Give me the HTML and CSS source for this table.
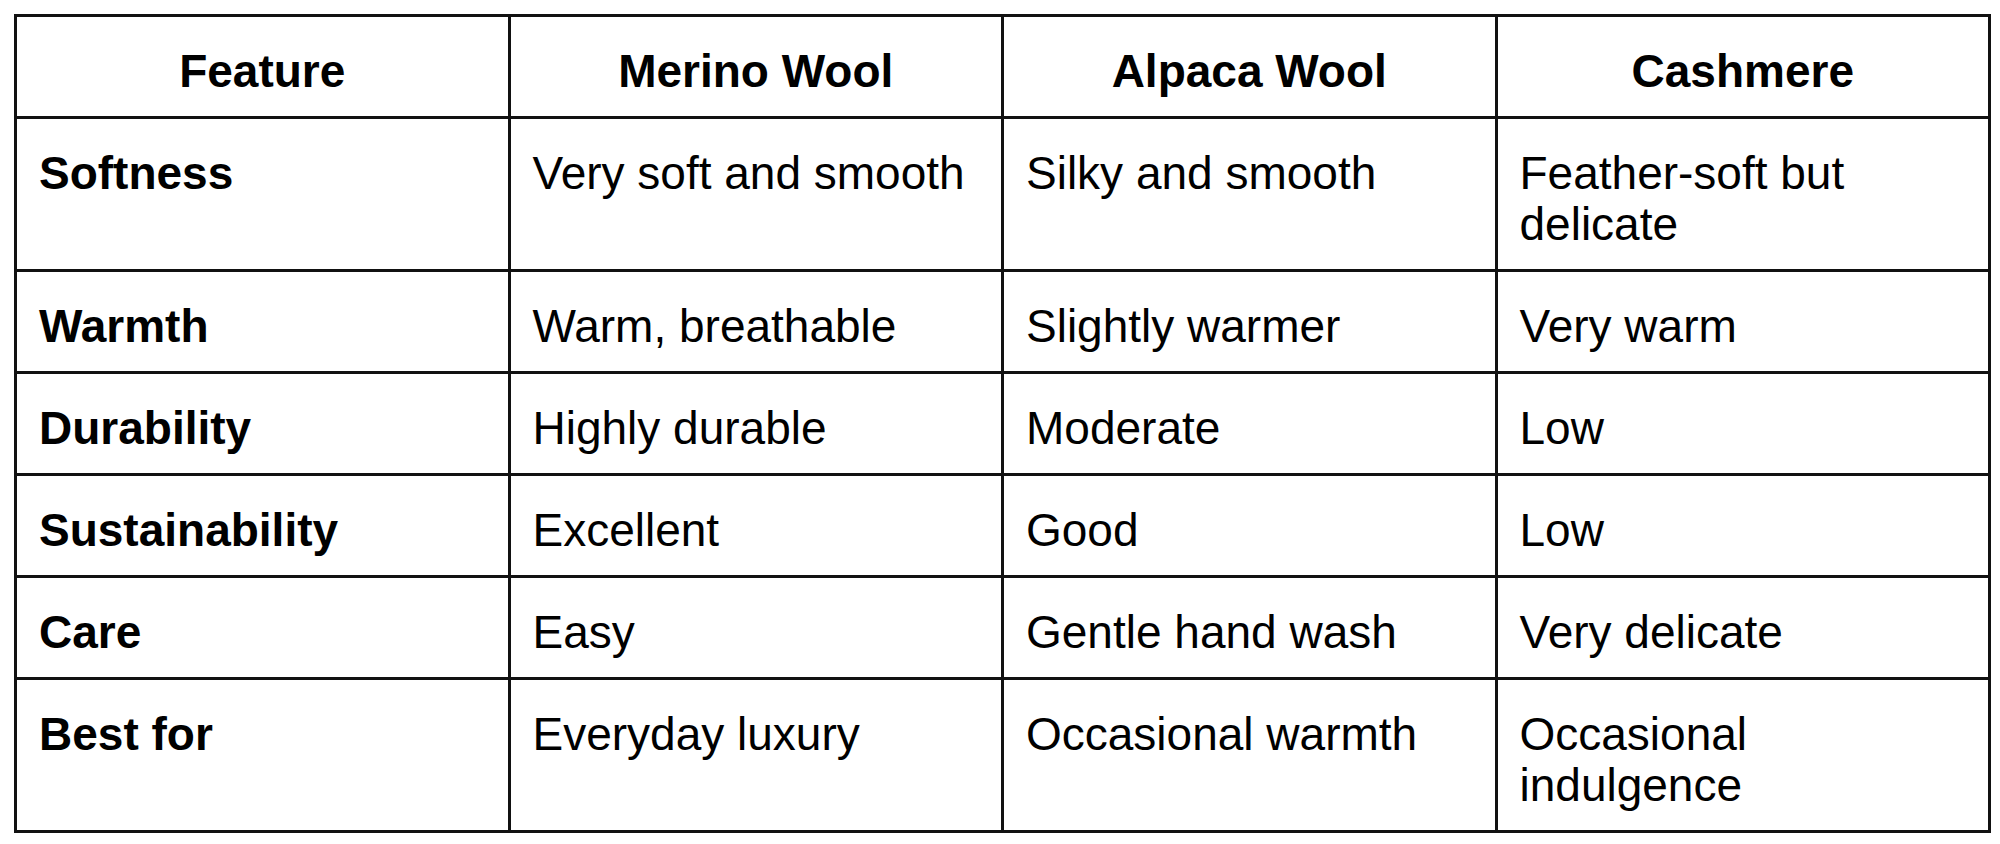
FILE: index.html
```html
<!DOCTYPE html>
<html lang="en">
<head>
<meta charset="utf-8">
<title>Wool comparison</title>
<link rel="stylesheet" href="styles.css">
</head>
<body>
<div class="page">
  <table class="compare">
    <thead>
      <tr>
        <th>Feature</th>
        <th>Merino Wool</th>
        <th>Alpaca Wool</th>
        <th>Cashmere</th>
      </tr>
    </thead>
    <tbody>
      <tr>
        <td class="feat">Softness</td>
        <td>Very soft and smooth</td>
        <td>Silky and smooth</td>
        <td>Feather-soft but delicate</td>
      </tr>
      <tr>
        <td class="feat">Warmth</td>
        <td>Warm, breathable</td>
        <td>Slightly warmer</td>
        <td>Very warm</td>
      </tr>
      <tr>
        <td class="feat">Durability</td>
        <td>Highly durable</td>
        <td>Moderate</td>
        <td>Low</td>
      </tr>
      <tr>
        <td class="feat">Sustainability</td>
        <td>Excellent</td>
        <td>Good</td>
        <td>Low</td>
      </tr>
      <tr>
        <td class="feat">Care</td>
        <td>Easy</td>
        <td>Gentle hand wash</td>
        <td>Very delicate</td>
      </tr>
      <tr>
        <td class="feat">Best for</td>
        <td>Everyday luxury</td>
        <td>Occasional warmth</td>
        <td>Occasional indulgence</td>
      </tr>
    </tbody>
  </table>
</div>
</body>
</html>
```

FILE: styles.css
```css
html, body {
  margin: 0;
  padding: 0;
  background: #ffffff;
}

.page {
  padding: 14px;
}

.compare {
  width: 1977px;
  table-layout: fixed;
  border-collapse: collapse;
  border: 3px solid #111;
  font-family: "Liberation Sans", Arial, sans-serif;
  font-size: 46px;
  line-height: 51px;
  color: #000;
}

.compare th,
.compare td {
  border: 3px solid #111;
  padding: 29px 22px 19px 22px;
  vertical-align: top;
  text-align: left;
  font-weight: normal;
}

.compare th {
  font-weight: bold;
  text-align: center;
}

.compare td.feat {
  font-weight: bold;
}
```
